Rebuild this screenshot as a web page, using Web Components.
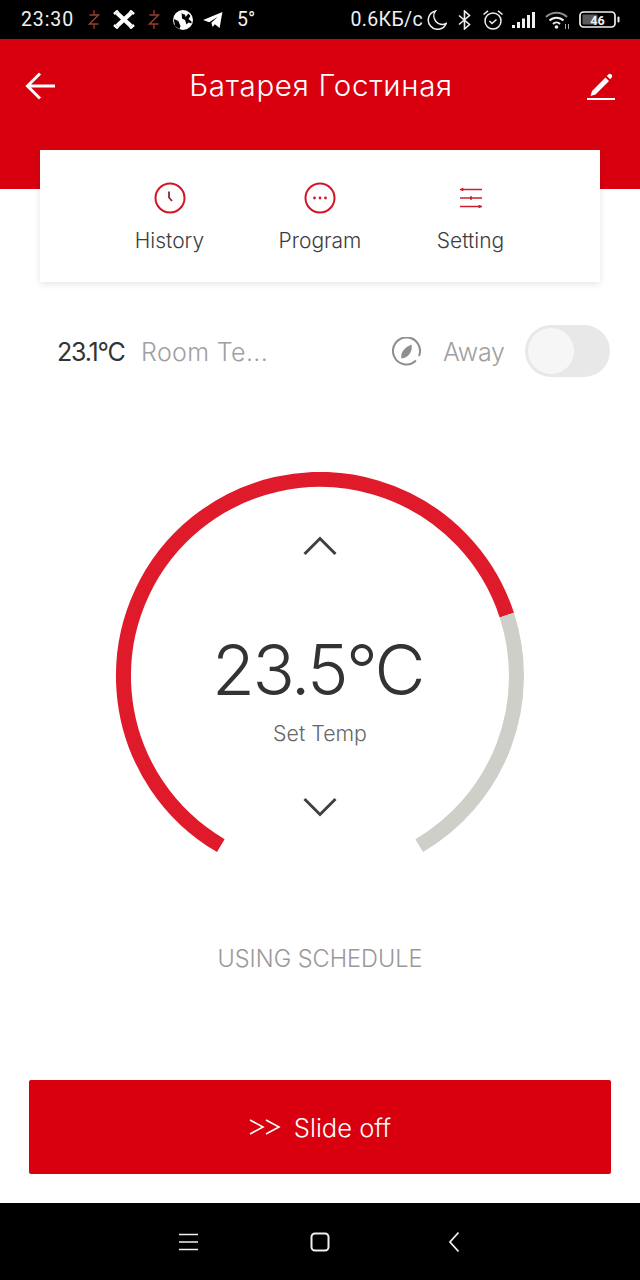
<!DOCTYPE html>
<html><head><meta charset="utf-8">
<style>
html,body{margin:0;padding:0;background:#fff}
body{width:640px;height:1280px;overflow:hidden;font-family:"Inter","Roboto",sans-serif}
app-screen{height:1280px}
</style></head>
<body>
<app-screen>
  <status-bar></status-bar>
  <top-header title-text="Батарея Гостиная"></top-header>
  <menu-card></menu-card>
  <away-row></away-row>
  <temp-dial></temp-dial>
  <schedule-note>USING SCHEDULE</schedule-note>
  <slide-button></slide-button>
  <nav-bar></nav-bar>
</app-screen>
<script>
function def(name, html){
  customElements.define(name, class extends HTMLElement{
    constructor(){super();this.attachShadow({mode:'open'}).innerHTML=html;}
    connectedCallback(){
      const t=this.shadowRoot.querySelector('[data-title]');
      if(t)t.textContent=this.getAttribute('title-text');
    }
  });
}
const F='"Inter","Roboto",sans-serif';
def('app-screen',`<style>:host{display:flex;flex-direction:column;width:640px;height:1280px}</style><slot></slot>`);

const Z=`<svg width="12" height="19" viewBox="0 0 12 19" fill="none" stroke="#9c3f2c" stroke-width="1.300"><path d="M6 0v5M1.500 5h9L1.500 14h9M6 14v5"/></svg>`;
def('status-bar',`<style>
:host{display:flex;align-items:center;justify-content:space-between;height:39px;background:#000;color:#f0f0f0;font:19.500px "Roboto",sans-serif;padding:0 20px 0 21px;box-sizing:border-box}
.g{display:flex;align-items:center}
svg{display:block}
.time{letter-spacing:.9px;width:53px;white-space:nowrap}
.net{letter-spacing:.35px}
</style>
<div class="g">
<span class="time">23:30</span>
<span style="margin-left:14px;display:block">${Z}</span>
<svg style="margin-left:13px" width="22" height="19" viewBox="0 0 22 19" fill="none" stroke="#fff" stroke-width="4.300"><path d="M4 3l14 13M18 3L4 16"/><path d="M1 4l4-3.500M21 4L17 .5M1 15l4 3.500M21 15l-4 3.500" stroke-width="2.500"/></svg>
<span style="margin-left:13px;display:block">${Z}</span>
<svg style="margin-left:13px" width="20" height="20" viewBox="0 0 20 20"><circle cx="10" cy="10" r="10" fill="#fff"/><path d="M8.500 1c-.5 2 1.500 3.500 3.500 3.500l.5 2.500 3-3.500 2 2.500-2 3 3 2.500v2l-3-1-2 2-1.500-4.500-3-1.500zM.8 9l4.500 2 2.200 5-1 3L2 16z" fill="#000"/></svg>
<svg style="margin-left:10px" width="20" height="16" viewBox="0 0 21 17"><path d="M0 8.500L20.500 0 17.500 17 12.500 13 10 16 8.800 11.500 15.500 5 6.500 11z" fill="#fff"/></svg>
<span style="margin-left:14px;font-size:19.500px">5°</span>
</div>
<div class="g">
<span class="net">0.6КБ/с</span>
<svg style="margin-left:4px" width="20" height="20" viewBox="0 0 20 20" fill="none" stroke="#f0f0f0" stroke-width="1.500"><path d="M8.500 .9A9.300 9.300 0 1 0 19.200 13.500 8.500 8.500 0 0 1 8.500 .9z"/></svg>
<svg style="margin-left:11px" width="13" height="20" viewBox="0 0 13 20" fill="none" stroke="#f0f0f0" stroke-width="1.600"><path d="M1 5.500l10.500 9-5 4.500V1l5 4.500-10.500 9"/></svg>
<svg style="margin-left:11px" width="22" height="22" viewBox="0 0 22 22" fill="none" stroke="#f0f0f0" stroke-width="1.500"><circle cx="11" cy="12" r="8"/><path d="M7.500 12l2.500 2.500 4.500-4M1.500 5.500L6 1.800M20.500 5.500L16 1.800"/></svg>
<svg style="margin-left:8px" width="23" height="16" viewBox="0 0 23 16" fill="#f0f0f0"><rect x="0" y="13" width="3" height="3"/><rect x="5" y="10" width="3" height="6"/><rect x="10" y="6.500" width="3" height="9.500"/><rect x="15" y="3" width="3" height="13"/><rect x="20" y="0" width="3" height="16"/></svg>
<svg style="margin-left:10px" width="25" height="18" viewBox="0 0 25 18" fill="none" stroke-width="2"><path d="M1 6a15 15 0 0 1 21 0" stroke="#8c8c8c"/><path d="M4.500 9.500a10 10 0 0 1 14 0" stroke="#f0f0f0"/><path d="M8 13a5 5 0 0 1 7 0" stroke="#f0f0f0"/><circle cx="11.500" cy="16" r="1.800" fill="#f0f0f0" stroke="none"/><path d="M20.500 13v5M23.500 13v5" stroke="#aaa" stroke-width="1"/></svg>
<svg style="margin-left:9px" width="41" height="17" viewBox="0 0 41 17" fill="none"><rect x="1" y="1" width="35" height="15" rx="3.500" stroke="#f0f0f0" stroke-width="1.700"/><rect x="3.500" y="3.500" width="15" height="10" rx="1" fill="#5a5a5a"/><rect x="38.500" y="5.500" width="2" height="6" rx="1" fill="#f0f0f0"/><text x="18.500" y="13.500" text-anchor="middle" fill="#f0f0f0" font-family="Roboto" font-weight="700" font-size="12.500">46</text></svg>
</div>`);

def('top-header',`<style>
:host{display:block;height:150px;background:#d8000f;color:#fff;box-sizing:border-box;flex:none}
.b{display:flex;align-items:center;justify-content:space-between;height:94px;padding:0 25px}
h1{margin:-2px 0 0;font:300 29.500px ${F};letter-spacing:.7px}
svg{display:block}
</style>
<div class="b">
<svg width="32" height="30" viewBox="0 0 32 30" fill="none" stroke="#fff" stroke-width="3"><path d="M3 15h27M15 2.500L2.500 15 15 27.500"/></svg>
<h1 data-title></h1>
<svg width="30" height="32" viewBox="0 0 30 32" fill="#fff"><path d="M7 21L20.500 7.500l3.500 3.500L10.500 24.500l-5 1.500zM21.800 6l1.700-1.700a2 2 0 0 1 2.700 0l.5.5a2 2 0 0 1 0 2.700L25.200 9.200z"/><rect x="2" y="28" width="28" height="2"/></svg>
</div>`);

def('menu-item',`<style>
:host{display:flex;flex-direction:column;align-items:center;width:150.500px;color:#3d3d3d;font:300 21px ${F}}
.i{height:33px;margin-bottom:14px;display:flex;align-items:center}
::slotted(svg){display:block}
</style><div class="i"><slot name="icon"></slot></div><span><slot></slot></span>`);

def('menu-card',`<style>
:host{display:flex;justify-content:center;box-sizing:border-box;width:560px;height:132px;margin:-39px 0 0 40px;padding-top:31px;background:#fff;box-shadow:0 2px 7px rgba(0,0,0,.1);flex:none;position:relative}
svg{display:block}
</style>
<menu-item><svg slot="icon" width="32" height="32" viewBox="0 0 32 32" fill="none" stroke="#d11524" stroke-width="2"><circle cx="16" cy="16" r="14.500"/><path d="M15 9.500v6l3 3.500" stroke="#8a2a33" stroke-width="1.800"/></svg>History</menu-item>
<menu-item><svg slot="icon" width="32" height="32" viewBox="0 0 32 32" fill="none" stroke="#d11524" stroke-width="2"><circle cx="16" cy="16" r="14.500"/><circle cx="10.500" cy="16" r="1.400" fill="#d11524" stroke="none"/><circle cx="16" cy="16" r="1.400" fill="#d11524" stroke="none"/><circle cx="21.500" cy="16" r="1.400" fill="#d11524" stroke="none"/></svg>Program</menu-item>
<menu-item><svg slot="icon" width="24" height="20" viewBox="0 0 24 20" fill="none" stroke="#c91f2e" stroke-width="1.300"><path d="M1 1.500h22M1 10h22M1 18.500h22"/><path d="M3.500 0v3M12 8.200v3.600M20.500 17v3" stroke-width="1.800"/></svg>Setting</menu-item>`);

def('away-row',`<style>
:host{display:flex;align-items:center;height:52px;margin-top:43px;padding:0 30px 0 57px;font:300 25px ${F};color:#a0a0a0;flex:none}
span{margin-top:2px}
.t{color:#333;letter-spacing:-1.200px;width:70px;white-space:nowrap;font-weight:400}
.r{margin-left:14px;white-space:nowrap;letter-spacing:.35px}
.sp{flex:1}
svg{display:block}
.a{margin-left:22px;width:60px;margin-right:22px;white-space:nowrap;letter-spacing:-.3px}
.sw{width:85px;height:52px;border-radius:26px;background:#e8e8e8;position:relative}
.k{position:absolute;left:3px;top:3px;width:46px;height:46px;border-radius:50%;background:#f6f6f6}
</style>
<span class="t">23.1°C</span><span class="r">Room Te...</span><span class="sp"></span>
<svg width="29" height="29" viewBox="0 0 29 29" fill="none" stroke="#8f8f8f" stroke-width="2"><path d="M24 23.500A13.500 13.500 0 1 1 27 19"/><path d="M9.500 21.500c-1.500-6 3-11 10-14 1.500 7-3 13-10 14z" fill="#8f8f8f" stroke="none"/></svg>
<span class="a">Away</span><div class="sw"><div class="k"></div></div>`);

def('temp-dial',`<style>
:host{display:block;position:relative;width:640px;height:400px;margin-top:95px;flex:none;color:#333}
svg.d{position:absolute;left:0;top:0}
.c{position:absolute;left:0;width:640px;text-align:center;box-sizing:border-box}
.v{top:163px;font:300 70px/1 ${F};letter-spacing:-2.500px;padding-right:5px}
.s{top:249px;font:300 21.300px/1.2 ${F};color:#666}
</style>
<svg class="d" width="640" height="400" viewBox="0 472 640 400" fill="none">
<path d="M220.800 845.600A196.500 196.500 0 1 1 506.800 615.100" stroke="#df1a2a" stroke-width="15"/>
<path d="M506.800 615.100A196.500 196.500 0 0 1 419.200 845.600" stroke="#cfcfc9" stroke-width="15"/>
<path d="M304.500 554l15.500-15.500L335.500 554M304.500 799l15.500 15.500 15.500-15.500" stroke="#404040" stroke-width="3"/>
</svg>
<div class="c v">23.5°C</div><div class="c s">Set Temp</div>`);

def('schedule-note',`<style>:host{display:block;text-align:center;margin-top:72px;font:300 23.500px/30px ${F};color:#999;flex:none}</style><slot></slot>`);

def('slide-button',`<style>:host{display:flex;align-items:center;justify-content:center;box-sizing:border-box;width:582px;height:94px;margin:106px 0 0 29px;background:#d8000f;border-radius:2px;color:#fff;font:300 25.500px ${F};flex:none}
svg{display:block;margin-right:13px}
span{margin-top:1px}
</style><svg width="32" height="18" viewBox="0 0 32 18" fill="none" stroke="#fff" stroke-width="1.600"><path d="M1 2l13 7L1 16M17 2l13 7-13 7"/></svg><span>Slide off</span>`);

def('nav-bar',`<style>
:host{display:flex;align-items:center;justify-content:center;height:77px;margin-top:auto;background:#000;flex:none}
svg{display:block}
</style>
<svg style="margin-left:-2px" width="19" height="18" viewBox="0 0 19 18" fill="none" stroke="#f0f0f0" stroke-width="1.600"><path d="M0 1.500h19M0 9h19M0 16.500h19"/></svg>
<svg style="margin-left:112px" width="20" height="20" viewBox="0 0 20 20" fill="none" stroke="#f0f0f0" stroke-width="2"><rect x="1.500" y="1.500" width="17" height="17" rx="3.500"/></svg>
<svg style="margin-left:118px" width="12" height="22" viewBox="0 0 12 22" fill="none" stroke="#f0f0f0" stroke-width="1.800"><path d="M10.500 1.500L2 11l8.500 9.500"/></svg>`);
</script>
</body></html>
